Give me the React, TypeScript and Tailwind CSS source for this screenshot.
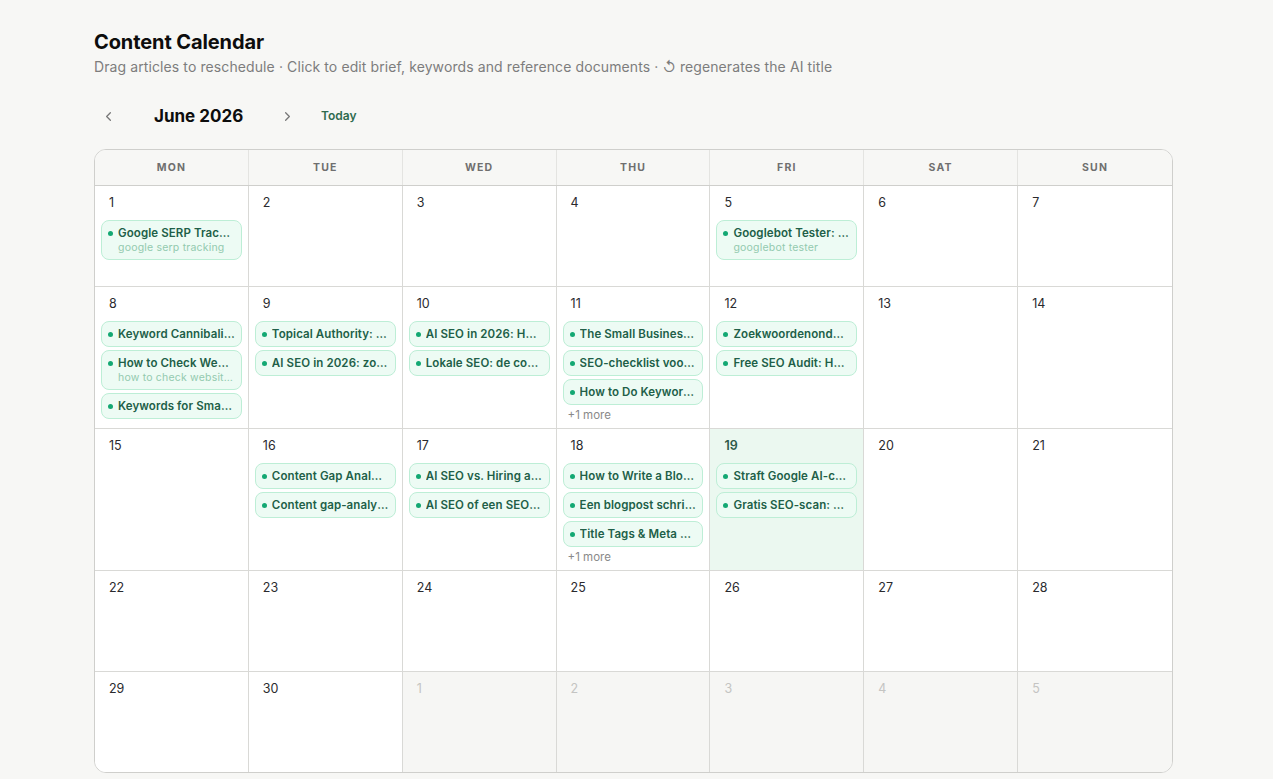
import { ChevronLeft, ChevronRight } from 'lucide-react';

interface Article {
  title: string;
  keyword?: string;
}

interface Day {
  date: number;
  inMonth: boolean;
  today?: boolean;
  articles?: Article[];
  more?: number;
}

const WEEKDAYS = ['MON', 'TUE', 'WED', 'THU', 'FRI', 'SAT', 'SUN'];

const weeks: Day[][] = [
  [
    { date: 1, inMonth: true, articles: [{ title: 'Google SERP Tracking Tools', keyword: 'google serp tracking' }] },
    { date: 2, inMonth: true },
    { date: 3, inMonth: true },
    { date: 4, inMonth: true },
    { date: 5, inMonth: true, articles: [{ title: 'Googlebot Tester: Check How Google Sees You', keyword: 'googlebot tester' }] },
    { date: 6, inMonth: true },
    { date: 7, inMonth: true },
  ],
  [
    {
      date: 8,
      inMonth: true,
      articles: [
        { title: 'Keyword Cannibalization Explained' },
        { title: 'How to Check Website Traffic', keyword: 'how to check website traffic' },
        { title: 'Keywords for Small Businesses' },
      ],
    },
    { date: 9, inMonth: true, articles: [{ title: 'Topical Authority: a Guide' }, { title: 'AI SEO in 2026: zo werkt het' }] },
    { date: 10, inMonth: true, articles: [{ title: 'AI SEO in 2026: How It Works' }, { title: 'Lokale SEO: de complete gids' }] },
    {
      date: 11,
      inMonth: true,
      articles: [
        { title: 'The Small Business SEO Guide' },
        { title: 'SEO-checklist voor kleine bedrijven' },
        { title: 'How to Do Keyword Research' },
      ],
      more: 1,
    },
    { date: 12, inMonth: true, articles: [{ title: 'Zoekwoordenonderzoek doen' }, { title: 'Free SEO Audit: How to Start' }] },
    { date: 13, inMonth: true },
    { date: 14, inMonth: true },
  ],
  [
    { date: 15, inMonth: true },
    { date: 16, inMonth: true, articles: [{ title: 'Content Gap Analysis' }, { title: 'Content gap-analyse uitgelegd' }] },
    { date: 17, inMonth: true, articles: [{ title: 'AI SEO vs. Hiring an Agency' }, { title: 'AI SEO of een SEO-bureau' }] },
    {
      date: 18,
      inMonth: true,
      articles: [
        { title: 'How to Write a Blog Post' },
        { title: 'Een blogpost schrijven' },
        { title: 'Title Tags & Meta Descriptions' },
      ],
      more: 1,
    },
    { date: 19, inMonth: true, today: true, articles: [{ title: 'Straft Google AI-content af?' }, { title: 'Gratis SEO-scan: check je site' }] },
    { date: 20, inMonth: true },
    { date: 21, inMonth: true },
  ],
  [22, 23, 24, 25, 26, 27, 28].map((d) => ({ date: d, inMonth: true })),
  [
    { date: 29, inMonth: true },
    { date: 30, inMonth: true },
    { date: 1, inMonth: false },
    { date: 2, inMonth: false },
    { date: 3, inMonth: false },
    { date: 4, inMonth: false },
    { date: 5, inMonth: false },
  ],
];

function ArticleChip({ article }: { article: Article }) {
  return (
    <div className="rounded-lg border border-[#bdeed6] bg-[#edfbf4] px-[6px] py-[4px]">
      <div className="flex items-center gap-[5px]">
        <span className="h-[5px] w-[5px] shrink-0 rounded-full bg-[#14a873]" />
        <span className="truncate text-[11.5px] font-semibold leading-4 tracking-[0.1px] text-[#215f48]">{article.title}</span>
      </div>
      {article.keyword && (
        <div className="truncate pl-[10px] text-[10.5px] leading-[14px] tracking-[0.2px] text-[#93caaf]">{article.keyword}</div>
      )}
    </div>
  );
}

function DayCell({ day, last }: { day: Day; last: boolean }) {
  const bg = day.today ? 'bg-[#ebf8f0]' : day.inMonth ? 'bg-white' : 'bg-[#f6f6f4]';
  return (
    <div className={`min-h-[100px] px-1.5 pt-1.5 pb-[5px] ${bg} ${last ? '' : 'border-r border-[#d9d9d6]'}`}>
      <div
        className={`h-[28px] px-[8px] pt-[1px] text-[12.5px] leading-5 ${
          day.inMonth ? (day.today ? 'font-semibold text-[#2d5a48]' : 'text-[#2a2a2e]') : 'text-[#c4c4c2]'
        }`}
      >
        {day.date}
      </div>
      <div className="flex flex-col gap-[3px]">
        {day.articles?.map((a) => (
          <ArticleChip key={a.title} article={a} />
        ))}
      </div>
      {day.more && <div className="px-[5px] pt-[2px] text-[11.5px] leading-4 text-[#8a8a8a]">+{day.more} more</div>}
    </div>
  );
}

export default function App() {
  return (
    <div className="min-h-screen bg-[#f7f7f5] pl-[94px] pt-[30px] pb-2 font-['Inter',sans-serif] text-[#111]">
      <h1 className="text-[20px] font-bold leading-6 tracking-[-0.1px] text-[#0d0d0d]">Content Calendar</h1>
      <p className="mt-[3px] text-[14px] leading-5 tracking-[0.1px] text-[#7d7d7d]">
        Drag articles to reschedule · Click to edit brief, keywords and reference documents · ↺ regenerates the AI title
      </p>

      <div className="mt-[23px] flex h-8 items-center">
        <button className="flex h-7 w-7 items-center justify-center text-[#777]">
          <ChevronLeft size={15} strokeWidth={2} />
        </button>
        <div className="ml-[32px] w-[113px] text-[17px] font-bold leading-6 text-[#0d0d0d]">June 2026</div>
        <button className="ml-[6px] flex h-7 w-7 items-center justify-center text-[#777]">
          <ChevronRight size={15} strokeWidth={2} />
        </button>
        <button className="ml-[20px] text-[12px] font-semibold text-[#2f6b4f]">Today</button>
      </div>

      <div className="mt-[17px] w-[1079px] overflow-hidden rounded-xl border border-[#cfcfcc] bg-white">
        <div className="grid h-[36px] grid-cols-7 border-b border-[#cfcfcc] bg-[#f7f7f5]">
          {WEEKDAYS.map((d, i) => (
            <div
              key={d}
              className={`flex items-center justify-center text-[10.5px] font-bold tracking-[1.2px] text-[#6f6f6f] ${
                i < 6 ? 'border-r border-[#e4e4e1]' : ''
              }`}
            >
              {d}
            </div>
          ))}
        </div>
        {weeks.map((week, wi) => (
          <div key={wi} className={`grid grid-cols-7 ${wi < weeks.length - 1 ? 'border-b border-[#d9d9d6]' : ''}`}>
            {week.map((day, di) => (
              <DayCell key={`${wi}-${di}`} day={day} last={di === 6} />
            ))}
          </div>
        ))}
      </div>
    </div>
  );
}
